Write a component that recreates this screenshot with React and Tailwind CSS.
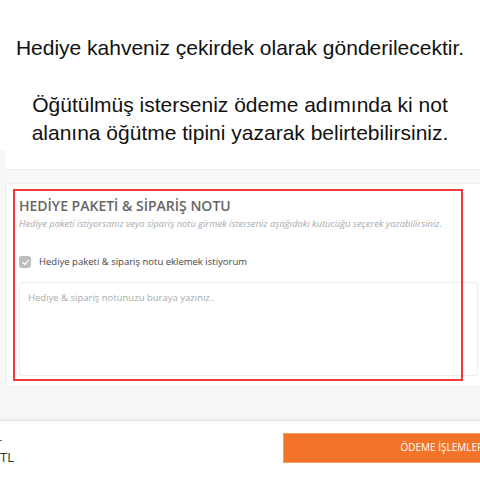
import React from 'react';

const CheckIcon = () => (
    <svg viewBox="0 0 12 12" className="w-[9px] h-[9px]">
        <path d="M2.5 6.2 L5 8.5 L9.5 3.5" fill="none" stroke="#fff" strokeWidth="1.8" strokeLinecap="round" strokeLinejoin="round" />
    </svg>
);

const App = () => {
    return (
        <div className="w-[480px] h-[480px] overflow-hidden bg-[#f7f7f7] flex flex-col relative">
            {/* duyuru metni */}
            <div className="h-[150px] bg-white shrink-0 pt-[34px] text-center text-[#111] text-[21px] leading-[28px]" style={{ fontFamily: '"Liberation Sans", Arial, sans-serif' }}>
                <p>Hediye kahveniz çekirdek olarak gönderilecektir.</p>
                <p className="mt-[29px]">Öğütülmüş isterseniz ödeme adımında ki not</p>
                <p>alanına öğütme tipini yazarak belirtebilirsiniz.</p>
            </div>

            <div className="pl-[6px] shrink-0" style={{ fontFamily: '"Open Sans", sans-serif' }}>
                <div className="w-[490px] h-[20px] bg-white border-b border-[#ececec]"></div>

                <div className="w-[490px] h-[204px] mt-[13px] bg-white border border-[#efefef] pl-[12px] pt-[12px] relative">
                    <h3 className="text-[14px] leading-[20px] font-semibold text-[#666]">HEDİYE PAKETİ &amp; SİPARİŞ NOTU</h3>
                    <p className="text-[9.4px] leading-[14px] italic text-[#aaa] mt-[1px]">Hediye paketi istiyorsanız veya sipariş notu girmek isterseniz aşağıdaki kutucuğu seçerek yazabilirsiniz.</p>

                    <label className="flex items-center gap-[8px] mt-[24px]">
                        <span className="w-[12px] h-[12px] rounded-[3px] bg-[#bdbdbd] flex items-center justify-center">
                            <CheckIcon />
                        </span>
                        <span className="text-[9.5px] text-[#444]">Hediye paketi &amp; sipariş notu eklemek istiyorum</span>
                    </label>

                    <div className="w-[459px] h-[94px] mt-[13px] border border-[#ececec] rounded-[3px] px-[8px] py-[8px] text-[9.5px] text-[#aaa]">
                        Hediye &amp; sipariş notunuzu buraya yazınız..
                    </div>

                    {/* kırmızı işaret kutusu */}
                    <div className="absolute left-[6px] top-[5px] w-[450px] h-[192px] border-2 border-[#f23a3f] pointer-events-none"></div>
                </div>
            </div>

            {/* alt bar */}
            <div className="mt-auto h-[60px] bg-white border-t border-[#e3e3e3] shadow-[0_-1px_3px_rgba(0,0,0,0.05)] flex items-center justify-between shrink-0" style={{ fontFamily: '"Open Sans", sans-serif' }}>
                <div className="flex flex-col leading-none">
                    <span className="w-[2px] h-[1px] bg-[#666] mb-[10px] mt-[2px]"></span>
                    <span className="text-[13px] text-[#333]">TL</span>
                </div>
                <button className="w-[205px] h-[30px] shrink-0 bg-[#f37328] border border-[#f79a63] text-white text-[10px] text-right pr-[1px] -mr-[8px] mb-[6px]">
                    ÖDEME İŞLEMLERİ
                </button>
            </div>
        </div>
    );
};

export default App;
